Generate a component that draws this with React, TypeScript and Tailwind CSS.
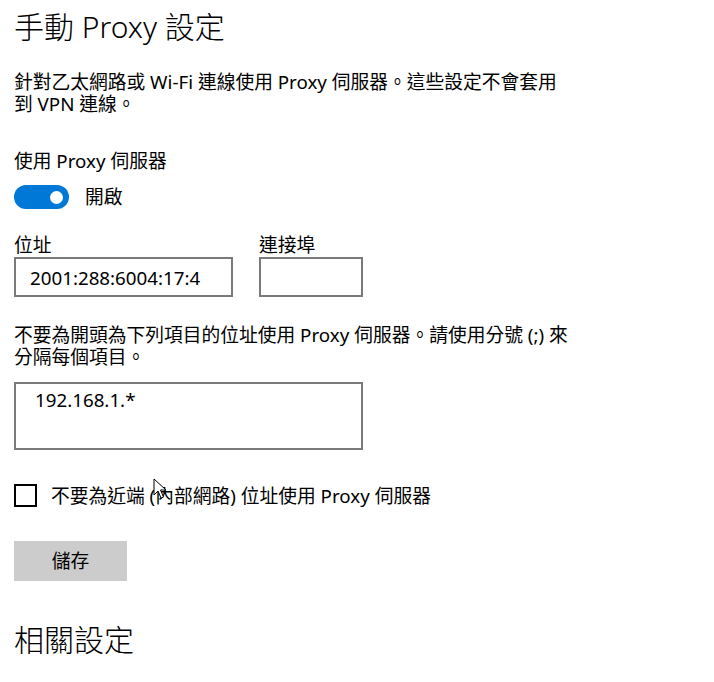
import React, { useState } from 'react';

const fontStack = "font-['Noto_Sans','Noto_Sans_CJK_TC',sans-serif]";

function Toggle({ on, onChange }: { on: boolean; onChange: (v: boolean) => void }) {
  return (
    <button
      type="button"
      onClick={() => onChange(!on)}
      className={
        on
          ? 'flex h-[24px] w-[55px] items-center justify-end rounded-full bg-[#0078d7] pr-[6px]'
          : 'flex h-[24px] w-[55px] items-center justify-start rounded-full border-2 border-black bg-white pl-[4px]'
      }
    >
      <span className={on ? 'h-[13px] w-[13px] rounded-full bg-white' : 'h-[13px] w-[13px] rounded-full bg-black'} />
    </button>
  );
}

function Cursor() {
  return (
    <svg
      className="pointer-events-none absolute left-[153px] top-[478px]"
      width="14"
      height="21"
      viewBox="0 0 14 21"
    >
      <polygon
        points="1,1 1,17 5,13 8,20 10.5,19 7.5,12 13,12"
        fill="white"
        stroke="black"
        strokeWidth="1"
        strokeLinejoin="miter"
      />
    </svg>
  );
}

export default function App() {
  const [useProxy, setUseProxy] = useState(true);
  const [address, setAddress] = useState('2001:288:6004:17:4');
  const [port, setPort] = useState('');
  const [exceptions, setExceptions] = useState('192.168.1.*');
  const [bypassLocal, setBypassLocal] = useState(false);

  return (
    <div className={`relative min-h-[682px] w-[714px] bg-white px-[14px] text-black ${fontStack}`}>
      <h1 className="pt-[7px] text-[30px] font-light leading-[40px]">手動 Proxy 設定</h1>

      <p className="mt-[24px] text-[18.75px] leading-[22px]">
        針對乙太網路或 Wi-Fi 連線使用 Proxy 伺服器。這些設定不會套用
        <br />
        到 VPN 連線。
      </p>

      <div className="mt-[35px] text-[18.75px] leading-[22px]">使用 Proxy 伺服器</div>

      <div className="mt-[13px] flex h-[24px] items-center gap-[16px]">
        <Toggle on={useProxy} onChange={setUseProxy} />
        <span className="text-[18.75px] leading-[22px]">{useProxy ? '開啟' : '關閉'}</span>
      </div>

      <div className="mt-[25px] flex gap-[26px]">
        <label className="flex w-[219px] flex-col gap-[1px]">
          <span className="text-[18.75px] leading-[22px]">位址</span>
          <input
            value={address}
            onChange={(e) => setAddress(e.target.value)}
            className="h-[40px] w-full border-2 border-[#7a7a7a] bg-white pl-[14px] text-[18.75px] leading-[22px] outline-none"
          />
        </label>
        <label className="flex w-[104px] flex-col gap-[1px]">
          <span className="text-[18.75px] leading-[22px]">連接埠</span>
          <input
            value={port}
            onChange={(e) => setPort(e.target.value)}
            className="h-[40px] w-full border-2 border-[#7a7a7a] bg-white pl-[10px] text-[18.75px] leading-[22px] outline-none"
          />
        </label>
      </div>

      <p className="mt-[27px] text-[18.75px] leading-[22px]">
        不要為開頭為下列項目的位址使用 Proxy 伺服器。請使用分號 (;) 來
        <br />
        分隔每個項目。
      </p>

      <textarea
        value={exceptions}
        onChange={(e) => setExceptions(e.target.value)}
        className="mt-[14px] block h-[68px] w-[349px] resize-none border-2 border-[#7a7a7a] bg-white pl-[19px] pt-[5px] text-[18.75px] leading-[22px] outline-none"
      />

      <label className="mt-[34px] flex h-[23px] cursor-default items-center gap-[14px]">
        <input
          type="checkbox"
          checked={bypassLocal}
          onChange={(e) => setBypassLocal(e.target.checked)}
          className="h-[23px] w-[23px] appearance-none border-2 border-black bg-white checked:bg-[#0078d7]"
        />
        <span className="text-[18.75px] leading-[22px]">不要為近端 (內部網路) 位址使用 Proxy 伺服器</span>
      </label>

      <button
        type="button"
        className="mt-[34px] block h-[40px] w-[113px] bg-[#cccccc] text-[18.75px] leading-[22px]"
      >
        儲存
      </button>

      <h2 className="mt-[39px] text-[30px] font-light leading-[40px]">相關設定</h2>

      <Cursor />
    </div>
  );
}
